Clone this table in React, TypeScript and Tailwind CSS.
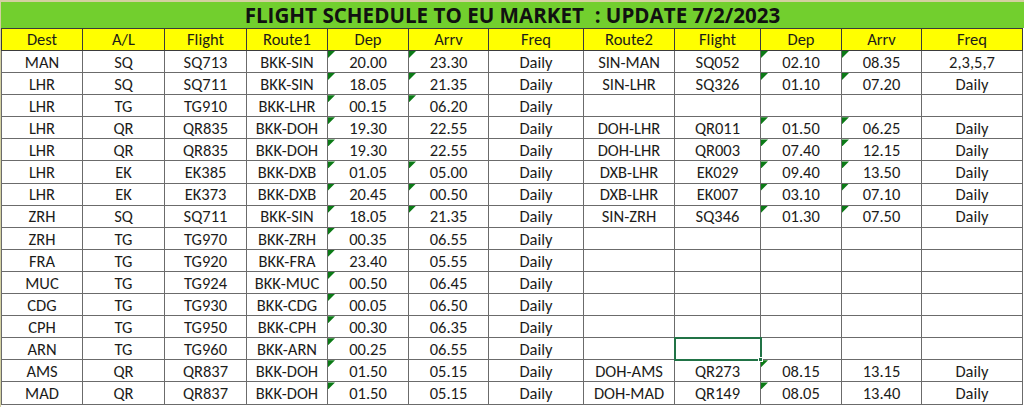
import React from 'react';

const font = { fontFamily: 'Calibri, Carlito, Lato, "Open Sans", sans-serif' };

const headers = ['Dest', 'A/L', 'Flight', 'Route1', 'Dep', 'Arrv', 'Freq', 'Route2', 'Flight', 'Dep', 'Arrv', 'Freq'];

const rows: string[][] = [
  ['MAN', 'SQ', 'SQ713', 'BKK-SIN', '20.00', '23.30', 'Daily', 'SIN-MAN', 'SQ052', '02.10', '08.35', '2,3,5,7'],
  ['LHR', 'SQ', 'SQ711', 'BKK-SIN', '18.05', '21.35', 'Daily', 'SIN-LHR', 'SQ326', '01.10', '07.20', 'Daily'],
  ['LHR', 'TG', 'TG910', 'BKK-LHR', '00.15', '06.20', 'Daily', '', '', '', '', ''],
  ['LHR', 'QR', 'QR835', 'BKK-DOH', '19.30', '22.55', 'Daily', 'DOH-LHR', 'QR011', '01.50', '06.25', 'Daily'],
  ['LHR', 'QR', 'QR835', 'BKK-DOH', '19.30', '22.55', 'Daily', 'DOH-LHR', 'QR003', '07.40', '12.15', 'Daily'],
  ['LHR', 'EK', 'EK385', 'BKK-DXB', '01.05', '05.00', 'Daily', 'DXB-LHR', 'EK029', '09.40', '13.50', 'Daily'],
  ['LHR', 'EK', 'EK373', 'BKK-DXB', '20.45', '00.50', 'Daily', 'DXB-LHR', 'EK007', '03.10', '07.10', 'Daily'],
  ['ZRH', 'SQ', 'SQ711', 'BKK-SIN', '18.05', '21.35', 'Daily', 'SIN-ZRH', 'SQ346', '01.30', '07.50', 'Daily'],
  ['ZRH', 'TG', 'TG970', 'BKK-ZRH', '00.35', '06.55', 'Daily', '', '', '', '', ''],
  ['FRA', 'TG', 'TG920', 'BKK-FRA', '23.40', '05.55', 'Daily', '', '', '', '', ''],
  ['MUC', 'TG', 'TG924', 'BKK-MUC', '00.50', '06.45', 'Daily', '', '', '', '', ''],
  ['CDG', 'TG', 'TG930', 'BKK-CDG', '00.05', '06.50', 'Daily', '', '', '', '', ''],
  ['CPH', 'TG', 'TG950', 'BKK-CPH', '00.30', '06.35', 'Daily', '', '', '', '', ''],
  ['ARN', 'TG', 'TG960', 'BKK-ARN', '00.25', '06.55', 'Daily', '', '', '', '', ''],
  ['AMS', 'QR', 'QR837', 'BKK-DOH', '01.50', '05.15', 'Daily', 'DOH-AMS', 'QR273', '08.15', '13.15', 'Daily'],
  ['MAD', 'QR', 'QR837', 'BKK-DOH', '01.50', '05.15', 'Daily', 'DOH-MAD', 'QR149', '08.05', '13.40', 'Daily'],
];

// green "number stored as text" markers, per row -> column indexes
const flags: number[][] = [
  [4, 5, 9, 10],
  [4, 5, 9, 10],
  [4, 5],
  [4, 9, 10],
  [4, 9, 10],
  [4, 5, 9, 10],
  [4, 5, 9, 10],
  [4, 5, 9, 10],
  [4],
  [4],
  [4],
  [4],
  [4],
  [4],
  [4, 9],
  [4, 9],
];

const widths = [81, 82, 82, 81, 81, 80, 95, 91, 86, 81, 80, 101];

const Marker = () => (
  <span
    className="absolute left-0 top-0 w-[7px] h-[7px] bg-[#0b7a16]"
    style={{ clipPath: 'polygon(0 0, 100% 0, 0 100%)' }}
  />
);

export default function App() {
  return (
    <div className="w-[1024px] h-[407px] bg-white border-t-2 border-l border-[#d3d0a0] overflow-hidden" style={font}>
      <div className="h-[26px] w-[1023px] bg-[#72cf2e] flex items-center justify-center">
        <span
          className="text-[20.6px] font-bold text-[#111] whitespace-pre leading-none pt-[1px]"
          style={{ fontFamily: '"Open Sans", Lato, sans-serif' }}
        >
          FLIGHT SCHEDULE TO EU MARKET  : UPDATE 7/2/2023
        </span>
      </div>
      <table className="table-fixed border-collapse w-[1021px] text-[16.5px] text-[#1c1c1a]">
        <colgroup>
          {widths.map((w, i) => (
            <col key={i} style={{ width: w }} />
          ))}
        </colgroup>
        <thead>
          <tr className="h-[22px] bg-[#ffff00]">
            {headers.map((h, i) => (
              <th key={i} className="border border-[#3b3b3b] font-normal text-center leading-none p-0">
                {h}
              </th>
            ))}
          </tr>
        </thead>
        <tbody>
          {rows.map((r, ri) => (
            <tr key={ri} className="h-[22.1px]">
              {r.map((c, ci) => (
                <td
                  key={ci}
                  className={
                    'relative border border-[#6b6b6b] text-center leading-none p-0 pt-[1px]' +
                    (ri === 13 && ci === 8 ? ' outline-2 outline-[#217346] -outline-offset-1' : '')
                  }
                >
                  {flags[ri].includes(ci) && <Marker />}
                  {c}
                  {ri === 13 && ci === 8 && (
                    <span className="absolute -right-[3px] -bottom-[3px] w-[5px] h-[5px] bg-[#217346] border border-white z-10" />
                  )}
                </td>
              ))}
            </tr>
          ))}
        </tbody>
      </table>
    </div>
  );
}
